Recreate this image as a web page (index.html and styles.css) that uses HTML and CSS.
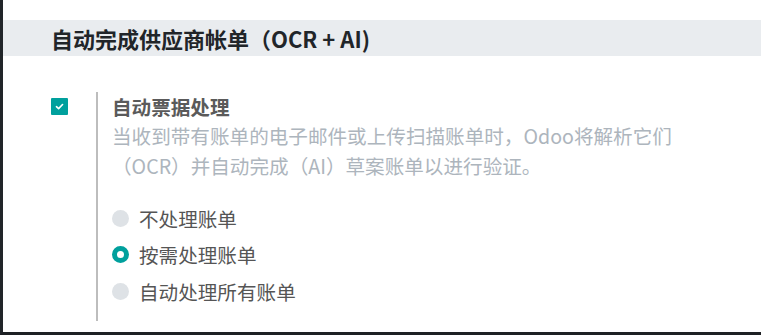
FILE: index.html
```html
<!DOCTYPE html>
<html lang="zh">
<head>
<meta charset="utf-8">
<link rel="stylesheet" href="styles.css">
</head>
<body>
<div class="frame">
  <div class="top-space"></div>
  <h2 class="band">自动完成供应商帐单（OCR + AI)</h2>
  <div class="setting">
    <div class="left">
      <span class="checkbox">
        <svg viewBox="0 0 10 10" width="9" height="9"><path d="M1.6 5.2 L4 7.4 L8.4 2.8" fill="none" stroke="#fff" stroke-width="1.8" stroke-linecap="round" stroke-linejoin="round"/></svg>
      </span>
    </div>
    <div class="right">
      <div class="label">自动票据处理</div>
      <div class="desc">当收到带有账单的电子邮件或上传扫描账单时，Odoo将解析它们（OCR）并自动完成（AI）草案账单以进行验证。</div>
      <div class="radios">
        <div class="radio-row"><span class="radio"></span><span class="rlabel">不处理账单</span></div>
        <div class="radio-row"><span class="radio checked"></span><span class="rlabel">按需处理账单</span></div>
        <div class="radio-row"><span class="radio"></span><span class="rlabel">自动处理所有账单</span></div>
      </div>
    </div>
  </div>
</div>
</body>
</html>
```
FILE: styles.css
```css
html, body {
  margin: 0;
  padding: 0;
  background: #fff;
}
body {
  font-family: "Noto Sans CJK SC", "Noto Sans", sans-serif;
  width: 761px;
  height: 335px;
  overflow: hidden;
}
.frame {
  box-sizing: border-box;
  width: 761px;
  height: 335px;
  border-left: 3px solid #212529;
  border-bottom: 3px solid #1e2124;
  background: #fff;
}
.top-space {
  height: 20px;
}
.band {
  margin: 0;
  height: 36px;
  line-height: 36px;
  background: #e9ecef;
  padding-left: 48px;
  font-size: 22px;
  font-weight: 700;
  color: #212529;
}
.setting {
  display: flex;
  margin-top: 36px;
}
.left {
  width: 93px;
  padding-left: 48px;
  box-sizing: border-box;
  padding-top: 6px;
}
.checkbox {
  display: flex;
  align-items: center;
  justify-content: center;
  width: 17px;
  height: 17px;
  background: #00a09d;
  border-radius: 1px;
}
.right {
  border-left: 2px solid #bdbdbd;
  padding-left: 14px;
  padding-bottom: 11px;
  font-size: 19.6px;
  line-height: 29.4px;
  width: 560px;
}
.label {
  font-weight: 700;
  color: #5a5a5a;
}
.desc {
  color: #adb5bd;
}
.radios {
  margin-top: 20px;
}
.radio-row {
  display: flex;
  align-items: center;
  height: 36.5px;
}
.radio {
  box-sizing: border-box;
  width: 17px;
  height: 17px;
  border-radius: 50%;
  background: #dee2e6;
  margin-right: 10px;
  flex: none;
}
.radio.checked {
  background: #fff;
  border: 5px solid #00a09d;
}
.rlabel {
  color: #555;
}
```
